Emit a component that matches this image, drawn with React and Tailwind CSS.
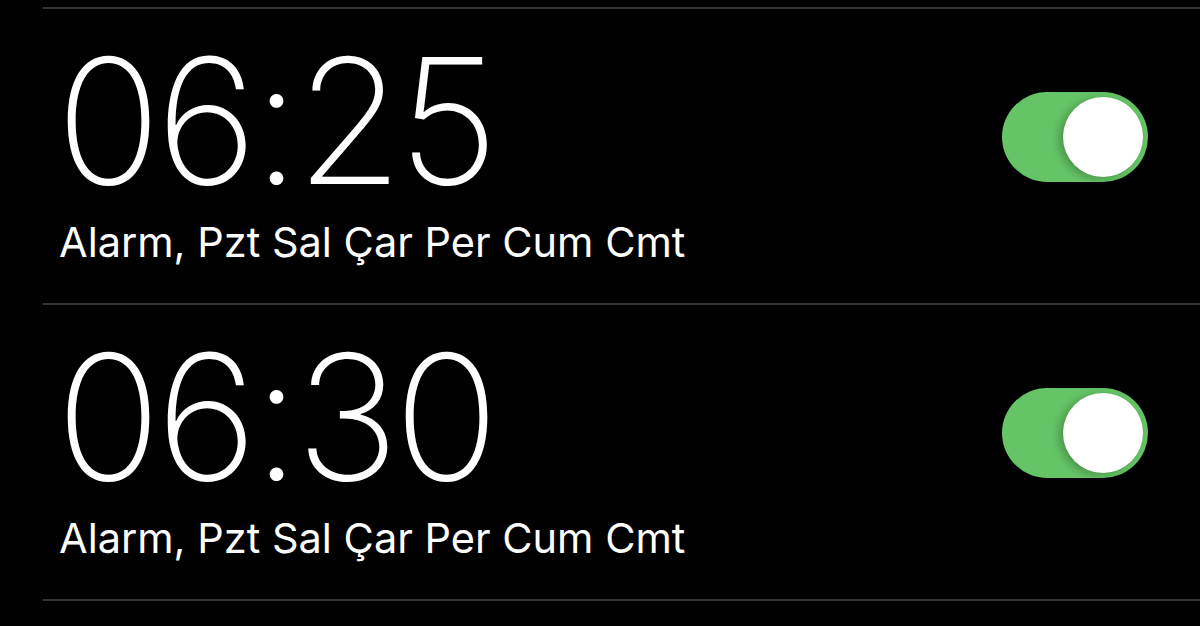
import React from "react";

const alarms = [
  { time: "06:25", label: "Alarm, Pzt Sal Çar Per Cum Cmt", on: true },
  { time: "06:30", label: "Alarm, Pzt Sal Çar Per Cum Cmt", on: true },
];

const Toggle = ({ on }) => (
  <div
    className={`flex h-[90px] w-[146px] items-center rounded-full p-[5px] ${
      on ? "justify-end bg-[#65c466]" : "justify-start bg-[#39393d]"
    }`}
  >
    <div className="h-[80px] w-[80px] rounded-full bg-white shadow-[-4px_2px_8px_rgba(0,0,0,0.25)]" />
  </div>
);

const AlarmRow = ({ alarm }) => (
  <div className="flex h-[296px] items-start justify-between border-b-2 border-[#333333] pl-[16px] pr-[52px] pt-[25px]">
    <div className="flex flex-col">
      <span className="-ml-[3px] font-['Inter',sans-serif] text-[174px] font-extralight leading-none tracking-[-5px] text-white">
        {alarm.time}
      </span>
      <span className="mt-[14px] font-['Inter',sans-serif] text-[41.5px] leading-none text-white">
        {alarm.label}
      </span>
    </div>
    <div className="mt-[58px]">
      <Toggle on={alarm.on} />
    </div>
  </div>
);

export default function App() {
  return (
    <div className="h-[626px] w-[1200px] overflow-hidden bg-black pt-[7px]">
      <div className="ml-[43px] border-t-2 border-[#333333]">
        {alarms.map((a, i) => (
          <AlarmRow key={i} alarm={a} />
        ))}
      </div>
    </div>
  );
}
